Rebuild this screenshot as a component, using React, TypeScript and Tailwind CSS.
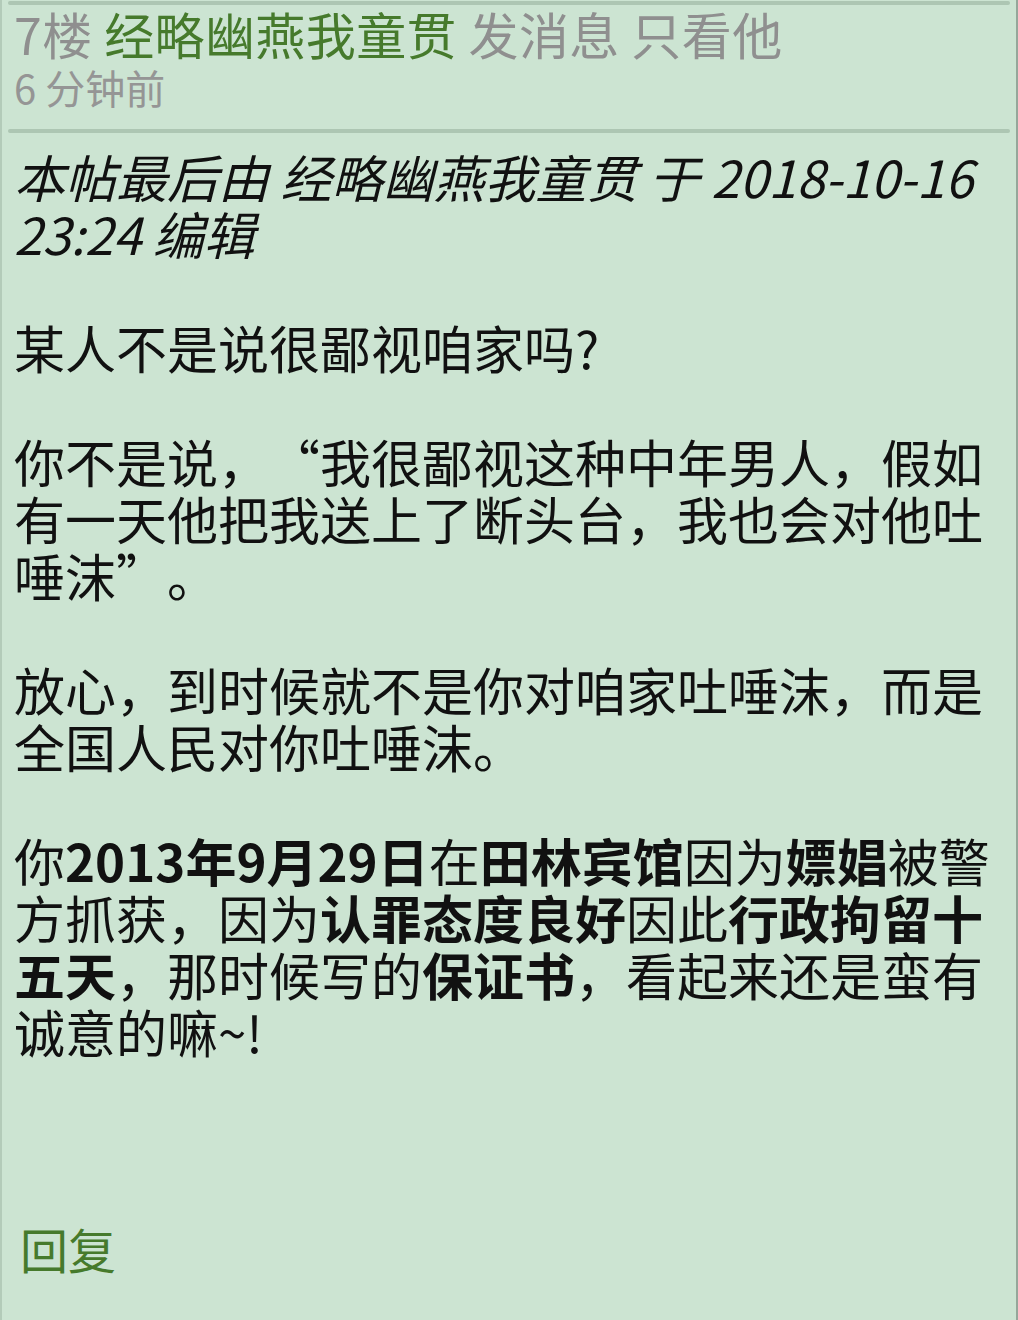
import React from 'react';

const font = { fontFamily: '"Noto Sans CJK SC", Roboto, "Noto Sans", sans-serif' };

function B({ children }: { children: React.ReactNode }) {
  return <span className="font-bold">{children}</span>;
}

// full-width curly quotes, as the phone's font draws them
function Lq() {
  return <span className="inline-block w-[1em] text-right">“</span>;
}
function Rq() {
  return <span className="inline-block w-[1em] text-left">”</span>;
}

export default function App() {
  return (
    <div
      style={font}
      className="flex min-h-[1320px] w-[1018px] flex-col border-l-2 border-r-2 border-l-[#b3cbb9] border-r-[#95a79a] bg-[#cce4d2]"
    >
      <div className="mx-[6px] mt-[1px] h-[4px] rounded-full bg-[#adc6b3]" />

      {/* floor header */}
      <div className="px-[12px]">
        <div className="text-[50px] leading-[56px] tracking-[0.4px] text-[#8f8f8f] whitespace-nowrap">
          <span>7楼 </span>
          <span className="text-[#467a2c]">经略幽燕我童贯</span>
          <span> 发消息 只看他</span>
        </div>
        <div className="mt-[1px] text-[40px] leading-[50px] text-[#959595]">6 分钟前</div>
      </div>

      <div className="mx-[6px] mt-[17px] h-[4px] rounded-full bg-[#adc6b3]" />

      {/* post body */}
      <div className="pl-[12px] pr-[20px] pt-[15px] text-[51px] leading-[57px] text-[#111111]">
        <p className="italic">本帖最后由 经略幽燕我童贯 于 2018-10-16 23:24 编辑</p>
        <br />
        <p>某人不是说很鄙视咱家吗?</p>
        <br />
        <p>
          你不是说，<Lq />我很鄙视这种中年男人，假如有一天他把我送上了断头台，我也会对他吐唾沫<Rq />。
        </p>
        <br />
        <p>放心，到时候就不是你对咱家吐唾沫，而是全国人民对你吐唾沫。</p>
        <br />
        <p>
          你<B>2013年9月29日</B>在<B>田林宾馆</B>因为<B>嫖娼</B>被警方抓获，因为<B>认罪态度良好</B>因此
          <B>行政拘留十五天</B>，那时候写的<B>保证书</B>，看起来还是蛮有诚意的嘛~!
        </p>
      </div>

      <div className="mt-[160px] px-[18px]">
        <span className="text-[48px] leading-[56px] text-[#467a2c]">回复</span>
      </div>
    </div>
  );
}
